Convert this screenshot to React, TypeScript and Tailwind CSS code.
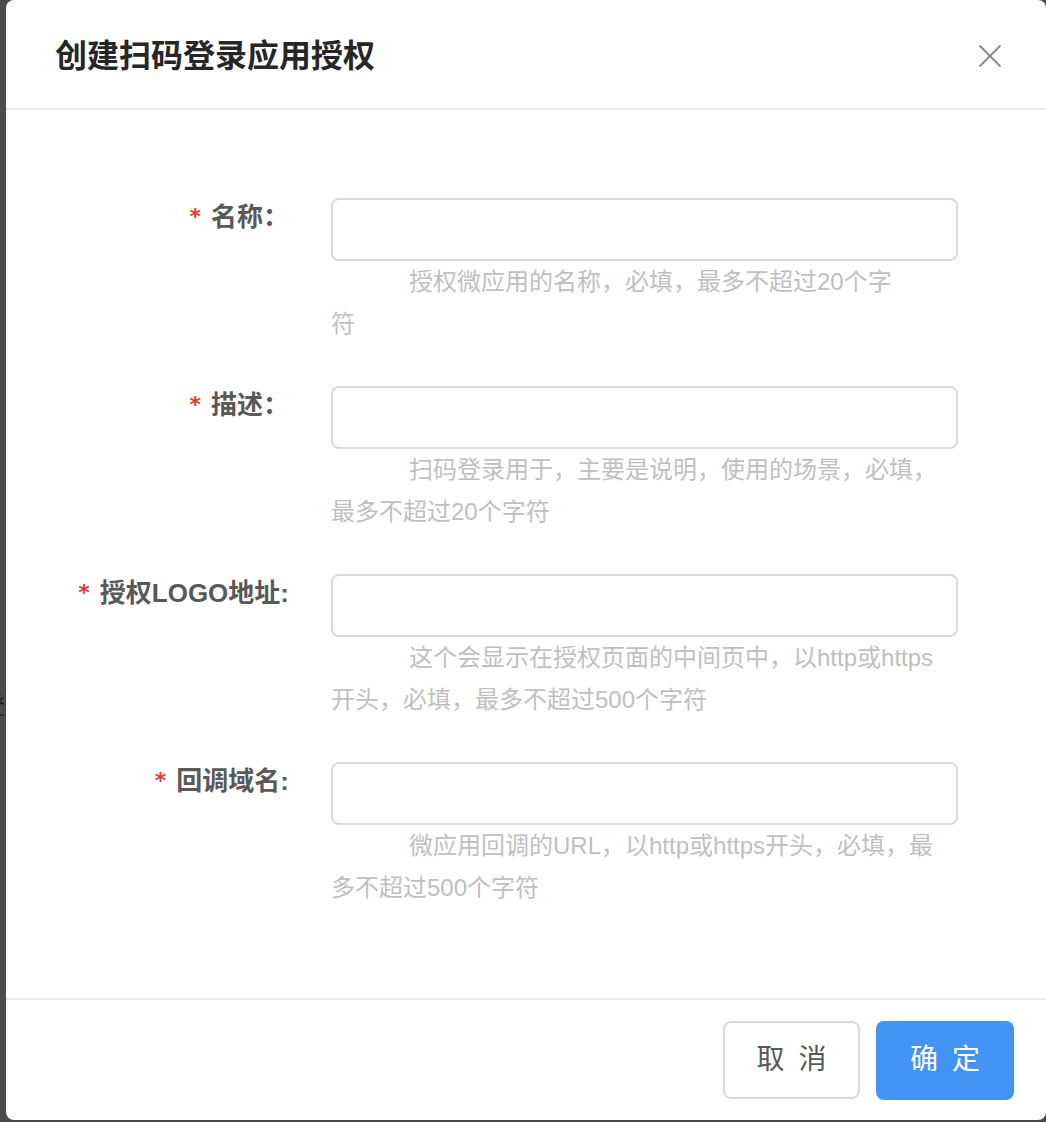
import React from 'react';

type Field = {
  label: string;
  hint: [string, string];
};

const fields: Field[] = [
  { label: '名称：', hint: ['授权微应用的名称，必填，最多不超过20个字', '符'] },
  { label: '描述：', hint: ['扫码登录用于，主要是说明，使用的场景，必填，', '最多不超过20个字符'] },
  { label: '授权LOGO地址:', hint: ['这个会显示在授权页面的中间页中，以http或https', '开头，必填，最多不超过500个字符'] },
  { label: '回调域名:', hint: ['微应用回调的URL，以http或https开头，必填，最', '多不超过500个字符'] },
];

const font = { fontFamily: '"Liberation Sans", "Noto Sans CJK SC", sans-serif' };

const FormRow: React.FC<{ field: Field }> = ({ field }) => (
  <div className="grid grid-cols-[283px_627px] gap-x-[42px]">
    <label className="flex justify-end text-[26px] leading-[38px] font-semibold text-[#595959] whitespace-nowrap">
      <span className="mr-[10px] font-['DejaVu_Sans',sans-serif] text-[22px] leading-[38px] font-bold text-[#ec3a2b]">
        *
      </span>
      {field.label}
    </label>
    <div className="flex flex-col">
      <input
        type="text"
        className="h-[63px] w-full rounded-[8px] border-2 border-[#d9d9d9] bg-white px-4 text-[24px] outline-none"
      />
      <div className="text-[24px] leading-[42px] text-[#bfbfbf]">
        <div className="whitespace-nowrap pl-[78px]">{field.hint[0]}</div>
        <div className="whitespace-nowrap">{field.hint[1]}</div>
      </div>
    </div>
  </div>
);

const App: React.FC = () => {
  return (
    <div
      className="relative flex h-[1122px] w-[1046px] overflow-hidden bg-[#4b4b4b] pb-[2px] pl-[6px]"
      style={font}
    >
      {/* page text peeking out behind the overlay */}
      <span className="absolute left-[-19px] top-[688px] text-[24px] text-[#1f1f1f]">登录</span>

      <div className="relative z-10 flex flex-1 flex-col rounded-[8px] bg-white">
        {/* Header */}
        <div className="flex h-[110px] items-center justify-between border-b-2 border-[#e9e9e9] pt-[4px] pl-[49px] pr-[44px]">
          <h2 className="text-[32px] font-semibold text-[#262626]">创建扫码登录应用授权</h2>
          <button className="flex h-[24px] w-[24px] items-center justify-center" aria-label="关闭">
            <svg width="24" height="24" viewBox="0 0 24 24" fill="none" stroke="#8c8c8c" strokeWidth="2">
              <line x1="1.5" y1="1.5" x2="22.5" y2="22.5" />
              <line x1="22.5" y1="1.5" x2="1.5" y2="22.5" />
            </svg>
          </button>
        </div>

        {/* Body */}
        <form className="flex flex-1 flex-col gap-[41px] pt-[88px]">
          {fields.map((f) => (
            <FormRow key={f.label} field={f} />
          ))}
        </form>

        {/* Footer */}
        <div className="flex h-[122px] items-center justify-end gap-[16px] border-t-2 border-[#e9e9e9] pr-[32px]">
          <button className="flex h-[78px] w-[137px] items-center justify-center gap-[14px] rounded-[8px] border-2 border-[#d9d9d9] bg-white text-[28px] text-[#595959]">
            <span>取</span>
            <span>消</span>
          </button>
          <button className="flex h-[79px] w-[138px] items-center justify-center gap-[14px] rounded-[8px] bg-[#4393f5] text-[28px] text-white">
            <span>确</span>
            <span>定</span>
          </button>
        </div>
      </div>
    </div>
  );
};

export default App;
